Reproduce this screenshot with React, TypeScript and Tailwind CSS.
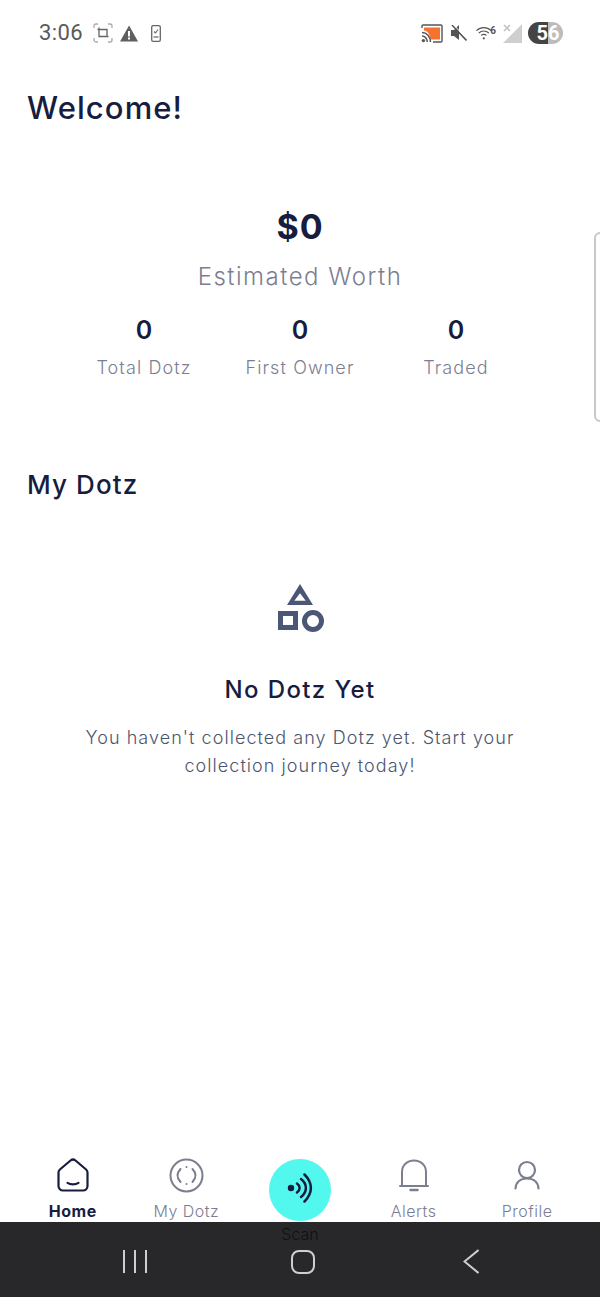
const INK = 'text-[#161d3f]'

function StatusLeft() {
  return (
    <div className="flex items-center">
      <span className="text-[22px] leading-none tracking-[0.4px] text-[#5a5a5a] font-['Roboto',sans-serif]">3:06</span>
      <svg className="ml-[10px]" width="20" height="20" viewBox="0 0 20 20" fill="none" stroke="#666" strokeWidth="1.300">
        <path d="M1 5V3a2 2 0 0 1 2-2h2M15 1h2a2 2 0 0 1 2 2v2M19 15v2a2 2 0 0 1-2 2h-2M5 19H3a2 2 0 0 1-2-2v-2" stroke="#aaa" />
        <path d="M4.500 6.500H14V14M15.500 13.500H6V4.500" />
      </svg>
      <svg className="ml-[7px]" width="18" height="17" viewBox="0 0 18 17">
        <path d="M9 .500 18 16.500H0Z" fill="#5f5f5f" />
        <rect x="8" y="6" width="2" height="5.500" fill="#fff" />
        <rect x="8" y="12.500" width="2" height="2" fill="#fff" />
      </svg>
      <svg className="ml-[13px]" width="10" height="17" viewBox="0 0 10 17" fill="none">
        <rect x=".7" y=".7" width="8.600" height="15.600" rx="1.400" stroke="#666" strokeWidth="1.300" />
        <path d="M3 6.500 4.500 8 7 4.500" stroke="#666" strokeWidth="1.100" />
        <path d="M2.500 12h5" stroke="#888" strokeWidth="1.600" />
      </svg>
    </div>
  )
}

function StatusRight() {
  return (
    <div className="flex items-center">
      <svg width="22" height="19" viewBox="0 0 22 19" fill="none">
        <path d="M1 4V2a1 1 0 0 1 1-1h18a1 1 0 0 1 1 1v15a1 1 0 0 1-1 1h-8" stroke="#555" strokeWidth="1.400" />
        <path d="M3 3.500h16v12H9.500C9 10 6.500 7 3 6.500Z" fill="#f5732f" />
        <path d="M1 8.500c4.800 0 8.500 4 8.500 9.500M1 12c2.900 0 5.300 2.500 5.300 6" stroke="#555" strokeWidth="1.600" />
        <circle cx="2.400" cy="16.600" r="1.700" fill="#555" />
      </svg>
      <svg className="ml-[8px]" width="16" height="16" viewBox="0 0 16 16">
        <path d="M0 5h3L8 0v15l-5-4H0Z" fill="#555" />
        <path d="M1 0 15.500 15.500" stroke="#555" strokeWidth="1.600" />
        <path d="M2.300 -.5 16.500 14.500" stroke="#fff" strokeWidth="1" />
      </svg>
      <div className="relative ml-[9px] h-[14px] w-[20px]">
        <svg width="16" height="14" viewBox="0 0 16 14" className="absolute left-0 top-0" fill="none" stroke="#555" strokeWidth="1.200">
          <path d="M.5 4.600C4.600.6 11 .6 15.100 4.600M2.800 7c2.900-2.700 7.100-2.700 10 0M5.100 9.400c1.600-1.300 3.800-1.300 5.400 0" />
          <circle cx="7.800" cy="12.300" r="1.100" fill="#555" stroke="none" />
        </svg>
        <span className="absolute right-0 top-0 text-[10px] leading-none font-bold text-[#555] font-['Roboto',sans-serif]">6</span>
      </div>
      <svg className="ml-[7px]" width="19" height="19" viewBox="0 0 19 19">
        <path d="M19 0V19H0Z" fill="#cfcfcf" />
        <path d="M1 1 7 7M7 1 1 7" stroke="#c4c4c4" strokeWidth="1.600" />
      </svg>
      <div className="ml-[6px] flex h-[22px] w-[35px] overflow-hidden rounded-full text-[20px] font-bold leading-none text-white font-['Roboto',sans-serif]">
        <div className="flex w-[20px] items-center justify-end bg-[#444]">5</div>
        <div className="flex flex-1 items-center bg-[#bcbcbc]">6</div>
      </div>
    </div>
  )
}

function HomeIcon() {
  return (
    <svg width="32" height="34" viewBox="0 0 32 34" fill="none" stroke="#161d3f" strokeWidth="2.200" strokeLinejoin="round" strokeLinecap="round">
      <path d="M1.500 14.500a4 4 0 0 1 1.400-3L13.500 2.500a4 4 0 0 1 5 0l10.600 9a4 4 0 0 1 1.400 3V28a4.500 4.500 0 0 1-4.500 4.500H6A4.500 4.500 0 0 1 1.500 28Z" />
      <path d="M10.500 24.800c3 2 8 2 11 0" />
    </svg>
  )
}

function DotzIcon() {
  return (
    <svg width="35" height="35" viewBox="0 0 35 35" fill="none" stroke="#7b7e8e" strokeWidth="2" strokeLinecap="round">
      <circle cx="17.500" cy="17.500" r="16" />
      <path d="M11.500 11Q5.500 17.500 11.500 24M23.500 11Q29.500 17.500 23.500 24" />
      <path d="M17.500 9v.1M17.500 26v.1" />
    </svg>
  )
}

function ScanIcon() {
  return (
    <svg className="mb-[4px]" width="28" height="30" viewBox="0 0 28 30" fill="none" stroke="#161d3f" strokeWidth="2.500" strokeLinecap="round">
      <circle cx="5" cy="15" r="3.200" fill="#161d3f" stroke="none" />
      <path d="M11 10.500C14.500 13 14.500 17 11 19.500" />
      <path d="M15 6C21.500 11 21.500 19 15 24" />
      <path d="M18.500 1.500C27 10 27 20 18.500 28.500" />
    </svg>
  )
}

function BellIcon() {
  return (
    <svg width="30" height="33" viewBox="0 0 30 33" fill="none" stroke="#7b7e8e" strokeWidth="2" strokeLinecap="round">
      <path d="M3 26.500V13C3 6.500 8 1.500 15 1.500S27 6.500 27 13V26.500" />
      <path d="M1 27h28" />
      <path d="M11.500 31h7" strokeWidth="2.500" />
    </svg>
  )
}

function ProfileIcon() {
  return (
    <svg width="26" height="30" viewBox="0 0 26 30" fill="none" stroke="#7b7e8e" strokeWidth="2.200" strokeLinecap="round">
      <circle cx="13" cy="10" r="8" />
      <path d="M1.500 28.500C2 22 6.500 18.500 13 18.500S24 22 24.500 28.500" />
    </svg>
  )
}

const NAV_ITEMS = [
  { label: 'Home', icon: HomeIcon, active: true },
  { label: 'My Dotz', icon: DotzIcon, active: false },
  { label: 'Scan', icon: null, active: false },
  { label: 'Alerts', icon: BellIcon, active: false },
  { label: 'Profile', icon: ProfileIcon, active: false },
]

const STATS = [
  { value: '0', label: 'Total Dotz' },
  { value: '0', label: 'First Owner' },
  { value: '0', label: 'Traded' },
]

export default function App() {
  return (
    <div className="relative flex h-[1297px] w-[600px] flex-col overflow-hidden bg-white font-['Inter',sans-serif]">
      {/* Status bar */}
      <div className="flex h-[66px] shrink-0 items-center justify-between pl-[39px] pr-[37px]">
        <StatusLeft />
        <StatusRight />
      </div>

      <h1 className={`ml-[27px] mt-[23px] text-[31px] font-medium leading-[38px] tracking-[1.100px] ${INK}`}>Welcome!</h1>

      {/* Worth */}
      <div className="mt-[78px] flex flex-col items-center">
        <div className={`text-[34px] font-bold leading-[44px] tracking-[0.8px] ${INK}`}>$0</div>
        <div className="mt-[12px] text-[24px] font-[350] leading-[32px] tracking-[1.500px] text-[#7b7e92]">Estimated Worth</div>
      </div>

      <div className="mt-[20px] grid grid-cols-3 px-[66px]">
        {STATS.map(stat => (
          <div key={stat.label} className="flex flex-col items-center">
            <div className={`text-[25px] font-semibold leading-[34px] ${INK}`}>{stat.value}</div>
            <div className="mt-[9px] text-[18px] font-[350] leading-[24px] tracking-[1.100px] text-[#7b7e92]">{stat.label}</div>
          </div>
        ))}
      </div>

      <h2 className={`ml-[27px] mt-[88px] text-[26px] font-medium leading-[34px] tracking-[1.100px] ${INK}`}>My Dotz</h2>

      {/* Empty state */}
      <div className="mt-[81px] flex flex-col items-center">
        <svg width="48" height="50" viewBox="0 0 48 50" fill="#4c5677" stroke="none">
          <path fillRule="evenodd" d="M24 1 37 22H11ZM24 10.300 18.300 17.700H29.700Z" />
          <rect x="4.500" y="30.500" width="15" height="14" fill="none" stroke="#4c5677" strokeWidth="5" />
          <circle cx="37" cy="38" r="8.500" fill="none" stroke="#4c5677" strokeWidth="5" />
        </svg>
        <div className={`mt-[41px] text-[24px] font-medium leading-[32px] tracking-[1.400px] ${INK}`}>No Dotz Yet</div>
        <p className="mt-[18px] w-[460px] text-center text-[18px] font-[350] leading-[28px] tracking-[1.050px] text-[#4d566f]">
          You haven't collected any Dotz yet. Start your collection journey today!
        </p>
      </div>

      {/* Bottom nav */}
      <div className="mt-auto grid h-[66px] shrink-0 grid-cols-5 px-[16px]">
        {NAV_ITEMS.map(({ label, icon: Icon, active }) =>
          Icon ? (
            <div key={label} className="flex flex-col items-center">
              <div className="flex h-[38px] items-center justify-center">
                <Icon />
              </div>
              <span className={`mt-[6px] text-[16px] leading-[22px] tracking-[0.5px] ${active ? `font-bold ${INK}` : 'font-light text-[#7b7e92]'}`}>{label}</span>
            </div>
          ) : (
            <div key={label} />
          ),
        )}
      </div>

      {/* Android nav bar */}
      <div className="flex h-[75px] shrink-0 items-center bg-[#28282a] pl-[123px] pt-[4px]">
        <div className="flex gap-[9px]">
          <div className="h-[23px] w-[2px] bg-[#cfcfcf]" />
          <div className="h-[23px] w-[2px] bg-[#cfcfcf]" />
          <div className="h-[23px] w-[2px] bg-[#cfcfcf]" />
        </div>
        <div className="ml-[144px] h-[24px] w-[24px] rounded-[8px] border-2 border-[#cfcfcf]" />
        <svg className="ml-[148px]" width="16" height="25" viewBox="0 0 16 25" fill="none" stroke="#cfcfcf" strokeWidth="2">
          <path d="M15.500 1 1.500 12.500 15.500 24" />
        </svg>
      </div>

      {/* Scan button sits over the nav bar */}
      <div className="absolute left-[269px] top-[1159px] flex h-[62px] w-[62px] items-center justify-center rounded-full bg-[#52f8ee]">
        <ScanIcon />
      </div>
      <span className="absolute left-[269px] top-[1224px] w-[62px] text-center text-[16px] font-light leading-[20px] text-[#111]">Scan</span>

      {/* Side drawer handle */}
      <div className="absolute right-[-12px] top-[232px] h-[190px] w-[18px] rounded-[6px] border-2 border-[#c8c8cc] bg-white" />
    </div>
  )
}
